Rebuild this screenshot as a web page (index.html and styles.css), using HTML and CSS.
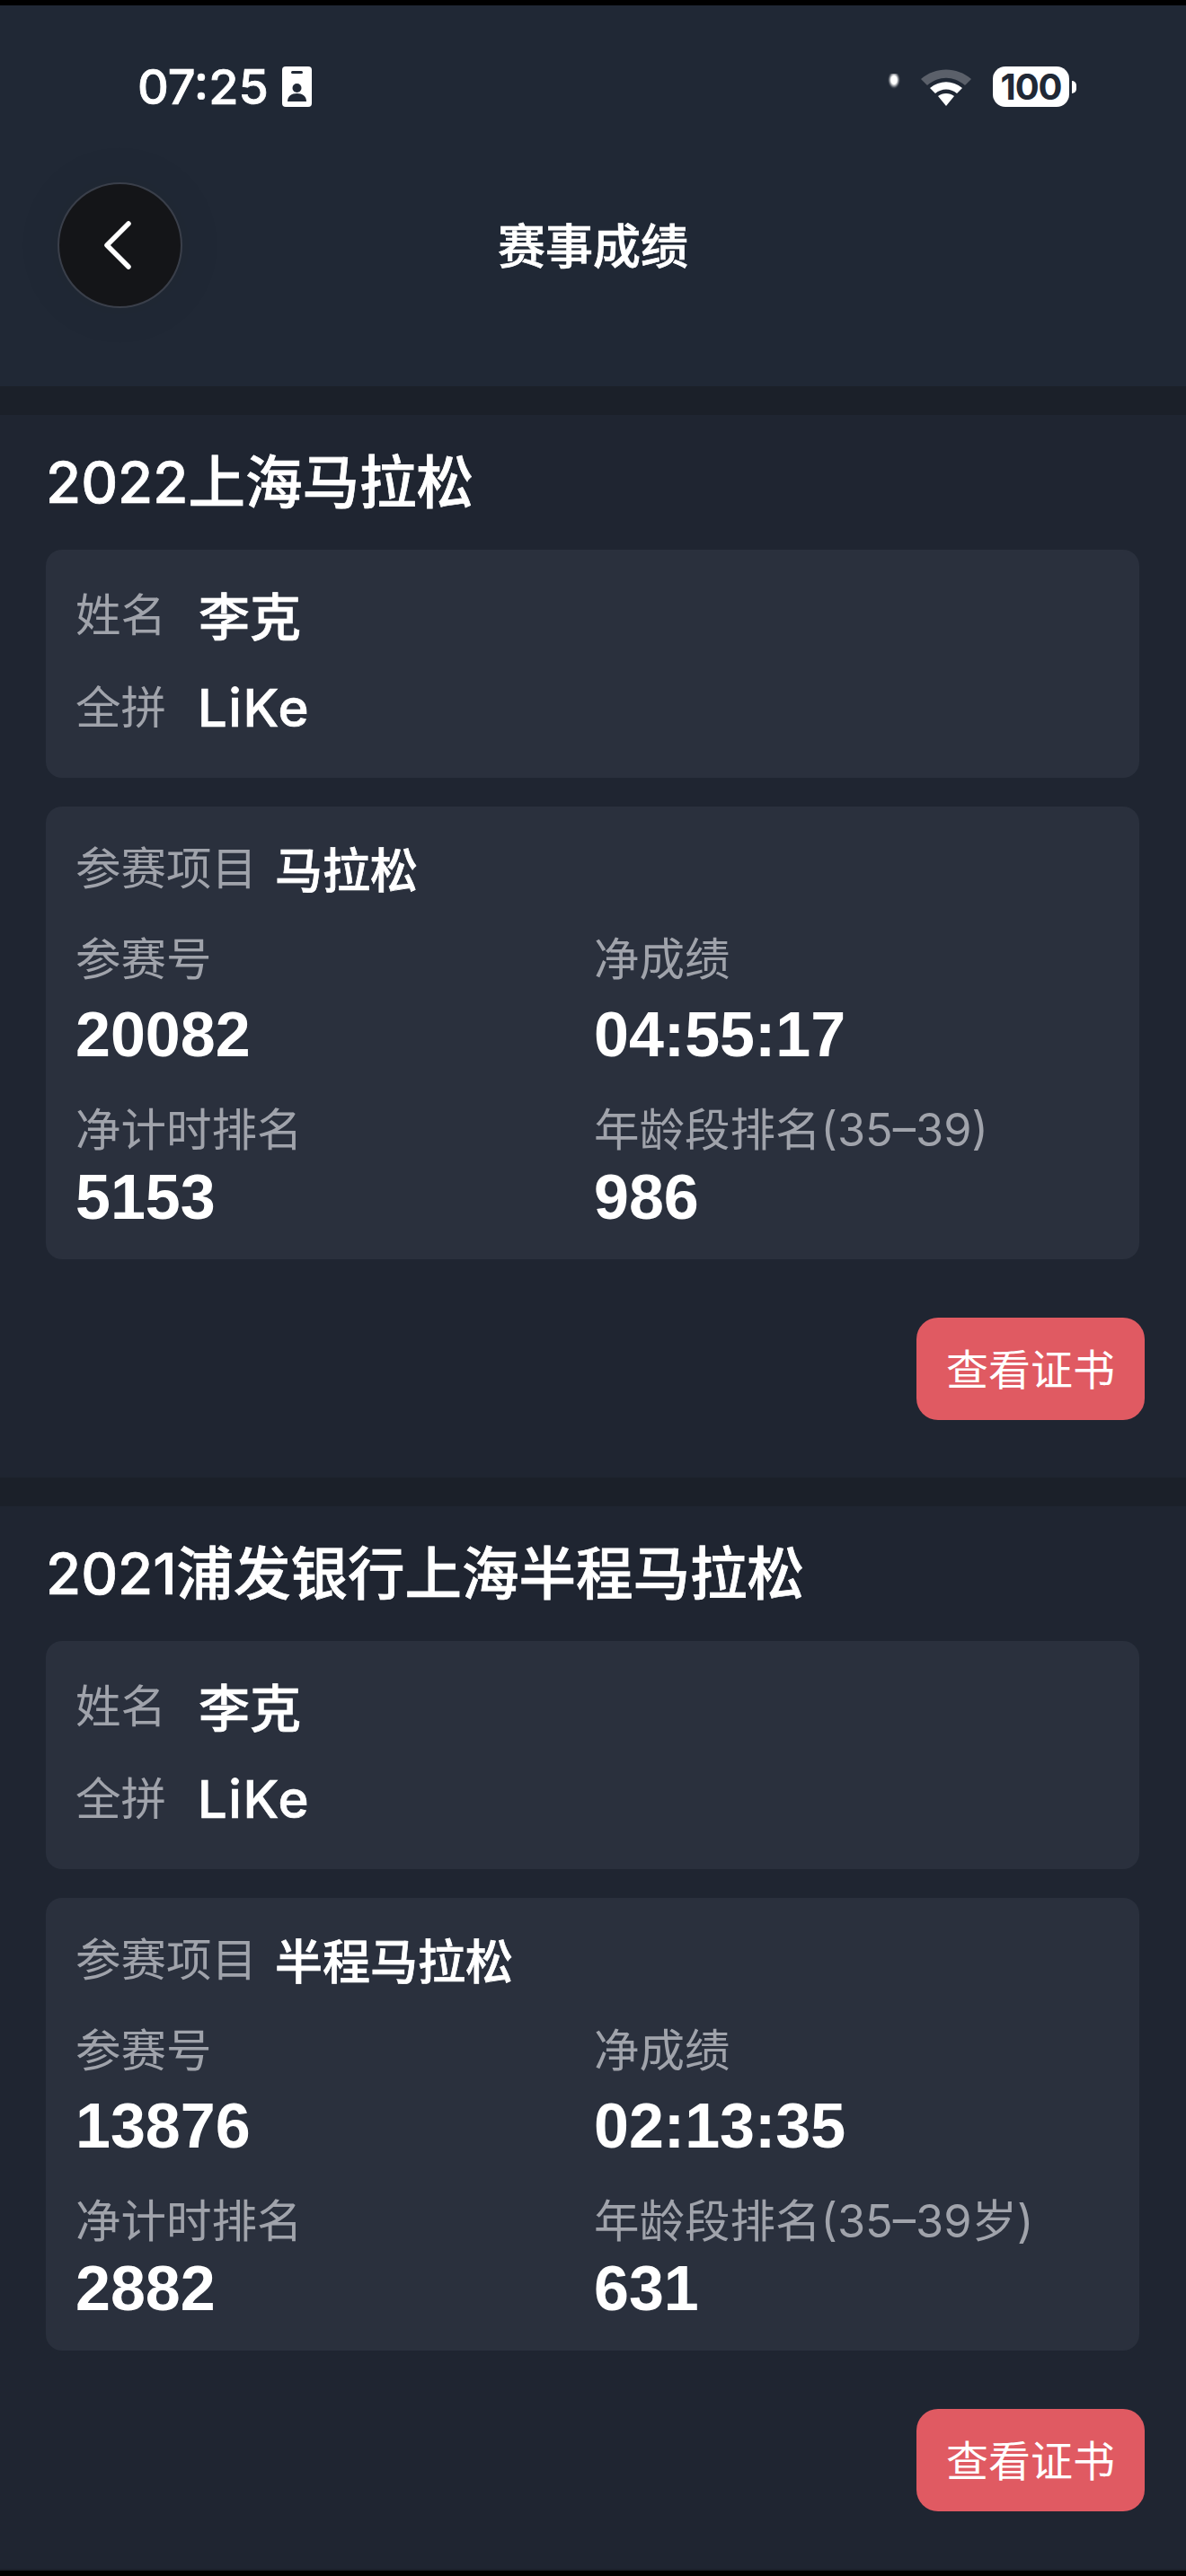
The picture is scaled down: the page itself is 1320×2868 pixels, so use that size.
FILE: index.html
```html
<!DOCTYPE html>
<html lang="zh-CN">
<head>
    <meta charset="UTF-8">
    <meta name="viewport" content="width=device-width, initial-scale=1.0">
    <title>赛事成绩</title>
    <link rel="stylesheet" href="styles.css">
</head>
<body>
    <header class="top">
        <div class="status">
            <div class="status-left">
                <span class="time">07:25</span>
                <svg class="badge-icon" width="33" height="45" viewBox="0 0 33 45">
                    <rect width="33" height="45" rx="4" fill="#fff"/>
                    <rect x="10" y="5" width="13" height="3" rx="1.5" fill="#202835"/>
                    <circle cx="16.5" cy="24" r="5" fill="#202835"/>
                    <path d="M6 39c0-6 4.500-9 10.500-9s10.500 3 10.500 9z" fill="#202835"/>
                </svg>
            </div>
            <div class="status-right">
                <span class="cam-dot"></span>
                <svg class="wifi" width="58" height="44" viewBox="0 0 58 44">
                    <path d="M1 13C17-1 41-1 57 13l-7 7C37 9 21 9 8 20z" fill="#5b606a"/>
                    <path d="M11 23c11-9 25-9 36 0l-6 6c-7-6-17-6-24 0z" fill="#fff"/>
                    <path d="M20 32c5-4 13-4 18 0l-9 11z" fill="#fff"/>
                </svg>
                <div class="battery"><span class="battery-num">100</span></div>
                <span class="battery-nub"></span>
            </div>
        </div>
        <div class="nav">
            <button class="back">
                <svg width="34" height="56" viewBox="0 0 34 56">
                    <path d="M29 4 5 28l24 24" fill="none" stroke="#fff" stroke-width="5.500" stroke-linecap="round" stroke-linejoin="round"/>
                </svg>
            </button>
            <h1 class="page-title">赛事成绩</h1>
        </div>
    </header>

    <section class="race">
        <h2 class="race-title">2022上海马拉松</h2>
        <div class="card card-name">
            <div class="name-row"><span class="label">姓名</span><span class="name-val">李克</span></div>
            <div class="name-row"><span class="label">全拼</span><span class="name-val name-latin">LiKe</span></div>
        </div>
        <div class="card card-result">
            <div class="event"><span class="label">参赛项目</span><span class="event-val">马拉松</span></div>
            <div class="grid">
                <div class="cell">
                    <div class="label">参赛号</div>
                    <div class="num">20082</div>
                </div>
                <div class="cell">
                    <div class="label">净成绩</div>
                    <div class="num">04:55:17</div>
                </div>
                <div class="cell cell-tight">
                    <div class="label">净计时排名</div>
                    <div class="num">5153</div>
                </div>
                <div class="cell cell-tight">
                    <div class="label">年龄段排名(35–39)</div>
                    <div class="num">986</div>
                </div>
            </div>
        </div>
        <div class="actions"><button class="cert">查看证书</button></div>
    </section>

    <section class="race">
        <h2 class="race-title">2021浦发银行上海半程马拉松</h2>
        <div class="card card-name">
            <div class="name-row"><span class="label">姓名</span><span class="name-val">李克</span></div>
            <div class="name-row"><span class="label">全拼</span><span class="name-val name-latin">LiKe</span></div>
        </div>
        <div class="card card-result">
            <div class="event"><span class="label">参赛项目</span><span class="event-val">半程马拉松</span></div>
            <div class="grid">
                <div class="cell">
                    <div class="label">参赛号</div>
                    <div class="num">13876</div>
                </div>
                <div class="cell">
                    <div class="label">净成绩</div>
                    <div class="num">02:13:35</div>
                </div>
                <div class="cell cell-tight">
                    <div class="label">净计时排名</div>
                    <div class="num">2882</div>
                </div>
                <div class="cell cell-tight">
                    <div class="label">年龄段排名(35–39岁)</div>
                    <div class="num">631</div>
                </div>
            </div>
        </div>
        <div class="actions"><button class="cert">查看证书</button></div>
    </section>
</body>
</html>
```

FILE: styles.css
```css
body {
    margin: 0;
    height: 2868px;
    overflow: hidden;
    box-sizing: border-box;
    border-top: 6px solid #000;
    border-bottom: 6px solid #000;
    background-color: #1b2029;
    color: #fff;
    font-family: Inter, "Noto Sans CJK SC", sans-serif;
}

/* medium text in the reference sits between the installed weights */
.time, .page-title, .race-title, .name-val, .event-val {
    font-weight: 500;
    -webkit-text-stroke: 0.7px #fff;
}

.top {
    height: 424px;
    background-color: #202835;
}

.status {
    display: flex;
    justify-content: space-between;
    align-items: center;
    height: 45px;
    padding: 68px 122px 0 153px;
}

.status-left {
    display: flex;
    align-items: center;
    gap: 15px;
}

.time {
    font-size: 54px;
    line-height: 45px;
}

.status-right {
    display: flex;
    align-items: center;
}

.cam-dot {
    width: 14px;
    height: 28px;
    margin: -2px 22px 0 0;
    background: radial-gradient(ellipse 7px 10px at 50% 7px, #fff 45%, rgba(255,255,255,0.14) 85%, rgba(255,255,255,0) 100%);
}

.wifi {
    margin-right: 23px;
}

.battery {
    display: flex;
    align-items: center;
    justify-content: center;
    width: 85px;
    height: 45px;
    border-radius: 14px;
    background-color: #fff;
}

.battery-num {
    color: #202835;
    font-family: Inter, sans-serif;
    font-size: 40px;
    font-weight: 700;
    line-height: 45px;
    letter-spacing: -1px;
}

.battery-nub {
    width: 5px;
    height: 14px;
    margin-left: 3px;
    border-radius: 0 7px 7px 0;
    background-color: #fff;
}

.nav {
    position: relative;
    display: flex;
    justify-content: center;
    align-items: center;
    height: 140px;
    margin-top: 84px;
}

.back {
    position: absolute;
    left: 64px;
    top: 0;
    display: flex;
    align-items: center;
    justify-content: center;
    width: 139px;
    height: 140px;
    padding: 0 6px 0 0;
    border: 2px solid #3a3f4a;
    border-radius: 50%;
    background-color: #141518;
    box-shadow: 0 0 60px rgba(0,0,0,0.06);
}

.page-title {
    margin: 3px 0 0;
    font-size: 53px;
    line-height: 70px;
}

.race {
    margin-top: 32px;
    padding: 31px 52px 64px 51px;
    background-color: #1f2531;
}

.race-title {
    margin: 0 0 31px;
    font-size: 63.500px;
    line-height: 88px;
}

.card {
    border-radius: 18px;
    background-color: #2a303d;
}

.card-name {
    display: flex;
    flex-direction: column;
    gap: 33px;
    padding: 38px 33px 43px;
}

.name-row {
    display: flex;
    align-items: center;
    height: 70px;
}

.label {
    color: #a0a3ab;
    font-size: 50.500px;
    line-height: 60px;
}

.name-val {
    margin: -4px 0 0 36px;
    font-size: 57px;
}

.name-latin {
    margin: 0 0 0 35px;
    font-size: 58px;
    letter-spacing: 1.500px;
}

.card-result {
    margin-top: 32px;
    padding: 34px 33px 29px;
}

.event {
    display: flex;
    align-items: center;
    height: 70px;
}

.event-val {
    margin: -2px 0 0 20px;
    font-size: 53px;
}

.grid {
    display: grid;
    grid-template-columns: 577px 1fr;
    row-gap: 36px;
    margin-top: 36px;
}

.num {
    margin-top: 14px;
    font-family: "Liberation Sans", sans-serif;
    font-size: 70px;
    font-weight: 700;
    line-height: 80px;
}

.cell-tight .num {
    margin-top: 5px;
}

.actions {
    display: flex;
    justify-content: flex-end;
    margin: 65px -6px 0 0;
}

.cert {
    width: 254px;
    height: 114px;
    padding: 0 0 5px;
    border: none;
    border-radius: 24px;
    background-color: #e05a62;
    color: #fff;
    font-family: inherit;
    font-size: 47px;
}
```
